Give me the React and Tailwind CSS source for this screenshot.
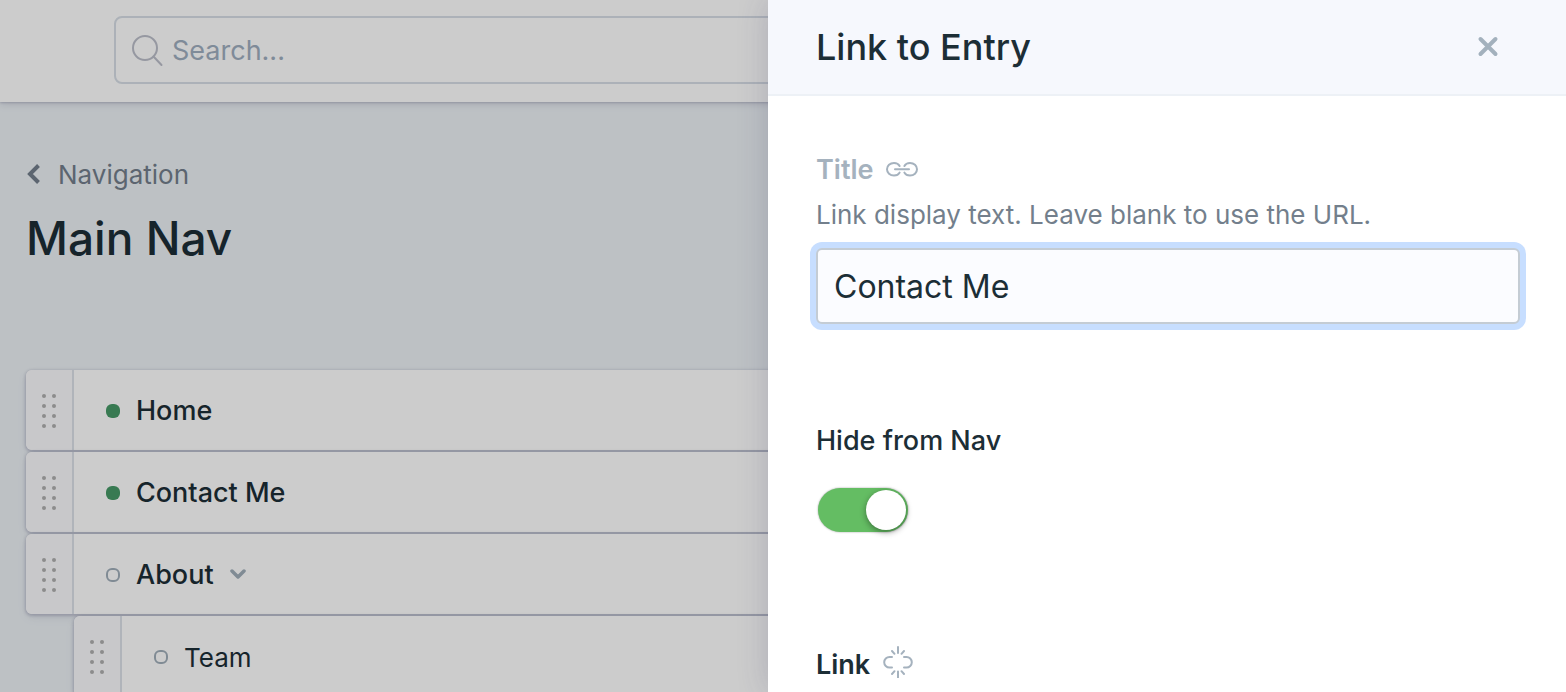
import { useState } from 'react';

const navItems = [
  { id: 1, title: 'Home', published: true },
  { id: 2, title: 'Contact Me', published: true },
  { id: 3, title: 'About', published: false, hasChildren: true },
  { id: 4, title: 'Team', published: false, child: true },
];

function SearchIcon() {
  return (
    <svg className="size-8 shrink-0 text-[#bcbfca]" viewBox="0 0 32 32" fill="none" stroke="currentColor" strokeWidth="2" strokeLinecap="round" aria-hidden="true">
      <circle cx="13" cy="13" r="12" />
      <path d="M21.5 21.5 29.500 30" />
    </svg>
  );
}

function LinkIcon() {
  return (
    <svg className="h-4 w-8" viewBox="0 0 32 16" fill="none" stroke="currentColor" strokeWidth="2" strokeLinecap="round" aria-hidden="true">
      <path d="M13.6 10.600C12.5 12.700 10.500 13.600 8 13.600 4 13.600 1 10.900 1 7.300S4 1 8 1c2.500 0 4.500.9 5.600 3" />
      <path d="M18.400 10.600c1.100 2.100 3.100 3 5.600 3 4 0 7-2.700 7-6.300S28 1 24 1c-2.500 0-4.500.9-5.600 3" />
      <path d="M9 7.300h14" />
    </svg>
  );
}

function BrokenLinkIcon() {
  return (
    <svg className="size-8" viewBox="0 0 32 32" fill="none" stroke="currentColor" strokeWidth="2" strokeLinecap="round" aria-hidden="true">
      <path d="M10 11H7.500a5.300 5.300 0 0 0 0 10.600H10" />
      <path d="M22 11h2.500a5.300 5.300 0 0 1 0 10.600H22" />
      <path d="M16 1v6M10 5l2.500 2.800M22 5l-2.500 2.800M16 25.500v6M12.500 25.200 10 28M19.500 25.200 22 28" />
    </svg>
  );
}

function DragHandle() {
  return (
    <button type="button" aria-label="Drag to reorder" className="flex w-12 shrink-0 items-center justify-center rounded-l-md border-r-2 border-[#dce2e9] bg-[#fafafd] pt-[2px]">
      <span className="grid grid-cols-2 gap-[6px]">
        {[...Array(8)].map((_, i) => (
          <span key={i} className="size-1 rounded-full bg-[#afafaf]" />
        ))}
      </span>
    </button>
  );
}

function NavRow({ item }) {
  return (
    <li className={item.child ? 'ml-12' : ''}>
      <div className="flex h-20 rounded-md bg-white shadow-[0_1px_3px_1px_rgba(49,49,93,0.21),0_4px_10px_rgba(49,49,93,0.08)]">
        <DragHandle />
        <div className="flex items-center pt-[2px] pl-8">
          <span
            className={
              item.published
                ? 'mr-4 size-[14px] rounded-md bg-[#479967]'
                : 'mr-4 size-[14px] rounded-md border-2 border-[#a0aeba]'
            }
          />
          <a href="#" className={item.child ? 'text-[26px]' : 'text-[27px] font-medium'}>
            {item.title}
          </a>
          {item.hasChildren && (
            <button type="button" aria-label="Toggle children" className="ml-4 text-[#a0aeba]">
              <svg className="h-4 w-4" viewBox="0 0 16 16" fill="none" stroke="currentColor" strokeWidth="3.500" strokeLinecap="round" strokeLinejoin="round" aria-hidden="true">
                <path d="m2 4 6 6 6-6" />
              </svg>
            </button>
          )}
        </div>
      </div>
    </li>
  );
}

function Page() {
  return (
    <div className="h-full bg-[#edf2f6]">
      <header className="bg-white pt-4 pr-7 pb-[18px] pl-[114px] shadow-[0_1px_2px_rgba(49,49,93,0.2),0_2px_8px_rgba(49,49,93,0.16)]">
        <label className="flex h-[68px] items-center gap-2 rounded-lg border-2 border-[#d7dee6] px-4 pt-[2px]">
          <SearchIcon />
          <input type="text" aria-label="Search" placeholder="Search..." className="w-full text-[27px] outline-none placeholder:text-[#9faec0]" />
        </label>
      </header>

      <main className="px-[26px] pt-14">
        <a href="#" className="flex h-8 items-center gap-4 text-[26px] text-[#737f8c]">
          <svg className="h-5 w-4" viewBox="0 0 16 20" fill="none" stroke="currentColor" strokeWidth="4" strokeLinejoin="miter" aria-hidden="true">
            <path d="M12.500 1.500 4 10l8.500 8.500" />
          </svg>
          Navigation
        </a>
        <h1 className="mt-4 text-[46px] leading-[64px] font-medium">Main Nav</h1>
        <ul className="mt-[100px] flex flex-col gap-[2px]">
          {navItems.map((item) => (
            <NavRow key={item.id} item={item} />
          ))}
        </ul>
      </main>
    </div>
  );
}

function LinkPanel() {
  const [title, setTitle] = useState('Contact Me');
  const [hidden, setHidden] = useState(true);

  return (
    <aside className="absolute inset-y-0 right-0 w-[calc(50%+15px)] overflow-hidden bg-white">
      <header className="flex h-24 items-center justify-between border-b-2 border-[#edf1f6] bg-[#f6f8fd] pr-16 pl-12">
        <h2 className="text-[36px] font-medium">Link to Entry</h2>
        <button type="button" aria-label="Close" className="text-[#a3b1bd]">
          <svg className="size-7" viewBox="0 0 28 28" fill="none" stroke="currentColor" strokeWidth="4" strokeLinecap="round" aria-hidden="true">
            <path d="m6.500 6 15 15M21.500 6l-15 15" />
          </svg>
        </button>
      </header>

      <form className="pt-14 pr-[46px] pl-12">
        <div className="flex h-9 items-center gap-3 text-[#a5b2be]">
          <label htmlFor="title" className="text-[27px] font-semibold">Title</label>
          <LinkIcon />
        </div>
        <p className="mt-2 h-10 text-[26px] leading-[38px] text-[#737f8c]">Link display text. Leave blank to use the URL.</p>
        <input
          id="title"
          type="text"
          value={title}
          onChange={(e) => setTitle(e.target.value)}
          className="mt-3 h-[76px] w-full rounded-md border-2 border-[#c4ccd4] bg-[#fbfcff] px-4 text-[32px] ring-6 ring-[#c7deff] outline-none"
        />

        <label htmlFor="hidden" className="mt-[99px] block h-9 text-[27px] leading-9 font-medium">Hide from Nav</label>
        <input
          id="hidden"
          type="checkbox"
          checked={hidden}
          onChange={(e) => setHidden(e.target.checked)}
          className="mt-[29px] ml-[2px] flex h-11 w-[90px] appearance-none items-center rounded-full bg-gray-300 px-[2px] shadow-[0_0_2px_rgba(0,0,0,0.4)] before:size-10 before:rounded-full before:bg-white before:shadow-[0_2px_6px_rgba(0,0,0,0.4)] checked:justify-end checked:bg-[#64bd63]"
        />

        <div className="mt-[111px] flex h-10 items-end gap-3">
          <h3 className="text-[27px] leading-9 font-semibold">Link</h3>
          <span className="h-[37px] text-[#a5b2be]">
            <BrokenLinkIcon />
          </span>
        </div>
      </form>
    </aside>
  );
}

function App() {
  return (
    <div className="relative h-screen overflow-hidden font-[Inter,sans-serif] text-[#1c2e36]">
      <Page />
      <div className="absolute inset-0 bg-black/20" />
      <div className="absolute inset-y-0 right-0 w-[calc(50%+15px)] shadow-[0_0_30px_rgba(49,49,93,0.2)]" />
      <LinkPanel />
    </div>
  );
}

export default App;
